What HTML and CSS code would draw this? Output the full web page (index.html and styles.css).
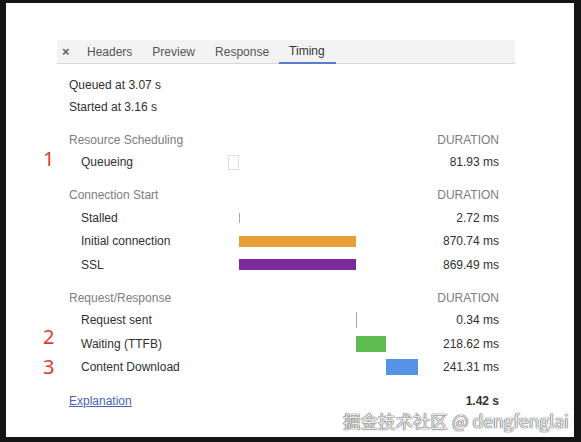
FILE: index.html
```html
<!DOCTYPE html>
<html>
<head>
<meta charset="utf-8">
<link rel="stylesheet" href="styles.css">
</head>
<body>
<div class="frame">
  <div class="pane">
    <div class="tabs">
      <span class="close">×</span>
      <span class="tab">Headers</span>
      <span class="tab">Preview</span>
      <span class="tab">Response</span>
      <span class="tab active">Timing</span>
    </div>
    <div class="content">
      <div class="info">Queued at 3.07 s</div>
      <div class="info">Started at 3.16 s</div>

      <div class="section">
        <div class="sec-head"><span>Resource Scheduling</span><span>DURATION</span></div>
        <div class="row">
          <span class="label">Queueing</span>
          <span class="bars"><span class="bar queue" style="margin-left:0px;width:11px"></span></span>
          <span class="dur">81.93 ms</span>
        </div>
      </div>

      <div class="section">
        <div class="sec-head"><span>Connection Start</span><span>DURATION</span></div>
        <div class="row">
          <span class="label">Stalled</span>
          <span class="bars"><span class="bar tick short" style="margin-left:11px;width:1px"></span></span>
          <span class="dur">2.72 ms</span>
        </div>
        <div class="row">
          <span class="label">Initial connection</span>
          <span class="bars"><span class="bar orange thin" style="margin-left:11px;width:117px"></span></span>
          <span class="dur">870.74 ms</span>
        </div>
        <div class="row">
          <span class="label">SSL</span>
          <span class="bars"><span class="bar purple thin" style="margin-left:11px;width:117px"></span></span>
          <span class="dur">869.49 ms</span>
        </div>
      </div>

      <div class="section">
        <div class="sec-head"><span>Request/Response</span><span>DURATION</span></div>
        <div class="row">
          <span class="label">Request sent</span>
          <span class="bars"><span class="bar tick" style="margin-left:128px;width:1px"></span></span>
          <span class="dur">0.34 ms</span>
        </div>
        <div class="row">
          <span class="label">Waiting (TTFB)</span>
          <span class="bars"><span class="bar green" style="margin-left:128px;width:29.5px"></span></span>
          <span class="dur">218.62 ms</span>
        </div>
        <div class="row">
          <span class="label">Content Download</span>
          <span class="bars"><span class="bar blue" style="margin-left:157.7px;width:32.3px"></span></span>
          <span class="dur">241.31 ms</span>
        </div>
      </div>

      <div class="footer">
        <a class="link" href="#">Explanation</a>
        <span class="total">1.42 s</span>
      </div>
    </div>
  </div>

  <span class="ann ann-1">1</span>
  <span class="ann ann-2">2</span>
  <span class="ann ann-3">3</span>
  <span class="watermark">掘金技术社区 @ dengfenglai</span>
</div>
</body>
</html>
```
FILE: styles.css
```css
html, body {
  margin: 0;
  padding: 0;
}
body {
  width: 581px;
  height: 442px;
  overflow: hidden;
  background: #141414;
  font-family: "Liberation Sans", Arial, sans-serif;
  font-size: 12px;
  color: #303030;
}
.frame {
  position: relative;
  margin: 3px 7px 0 6px;
  height: 434px;
  background: #ffffff;
}
.pane {
  margin-left: 51px;
  width: 458px;
  padding-top: 37px;
}
.tabs {
  display: flex;
  align-items: stretch;
  height: 23px;
  background: #f3f3f3;
  border-bottom: 1px solid #d8d8d8;
}
.close {
  display: flex;
  align-items: center;
  width: 15px;
  padding-left: 5px;
  color: #5f5f5f;
  font-size: 13px;
  font-weight: bold;
}
.tab {
  display: flex;
  align-items: center;
  padding: 0 10px;
  color: #555;
}
.tab.active {
  color: #333;
  border-bottom: 2px solid #5b78cf;
  margin-bottom: -1px;
  padding-right: 11px;
}
.content {
  padding: 10px 16px 0 12px;
}
.info {
  height: 22px;
  line-height: 22px;
}
.section {
  margin-top: 10.5px;
}
.sec-head {
  display: flex;
  justify-content: space-between;
  align-items: center;
  height: 22px;
  color: #7d7d7d;
}
.row {
  display: grid;
  grid-template-columns: 159px 190px 1fr;
  align-items: center;
  height: 23.33px;
}
.label {
  padding-left: 12px;
}
.bars {
  display: flex;
  align-items: center;
  height: 100%;
}
.bar {
  flex: none;
  height: 16px;
}
.bar.thin {
  height: 10.5px;
}
.queue {
  box-sizing: border-box;
  height: 15px;
  border: 1px solid #dcdcdc;
  background: #fff;
}
.tick {
  background: #a8a8a8;
}
.tick.short {
  height: 10px;
}
.orange {
  background: #e89f38;
}
.purple {
  background: #7b2b9d;
}
.green {
  background: #5dbd50;
}
.blue {
  background: #5692e5;
  height: 15.5px;
}
.dur {
  text-align: right;
}
.footer {
  display: flex;
  justify-content: space-between;
  align-items: center;
  height: 20px;
  margin-top: 12px;
  line-height: 12px;
}
.link {
  color: #4b5fc0;
  text-decoration: underline;
}
.total {
  font-weight: bold;
  color: #333;
}
.ann {
  position: absolute;
  left: 37px;
  font-family: "Noto Sans", sans-serif;
  font-size: 20px;
  line-height: 1;
  color: #e03a2a;
}
.ann-1 { top: 146px; }
.ann-2 { top: 323.5px; }
.ann-3 { top: 353.5px; }
.watermark {
  position: absolute;
  left: 337px;
  top: 409px;
  font-family: "Noto Sans CJK SC", sans-serif;
  font-size: 17.5px;
  line-height: 17px;
  white-space: nowrap;
  color: #ececec;
  text-shadow: 0 0 1px #555, 0 0 1px #555, 0 0 1px #777;
}
```
